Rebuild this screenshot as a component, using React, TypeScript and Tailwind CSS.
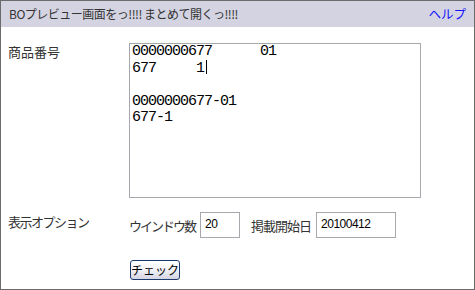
export default function App() {
  return (
    <div className="w-[475px] h-[290px] border border-[#6b6b6b] bg-white text-[#333] font-['Noto_Sans_CJK_JP',sans-serif] text-[13px] leading-none overflow-hidden">
      {/* title bar */}
      <div className="h-[26px] bg-[#d3d3e1] flex items-center justify-between pl-[8px] pr-[8px]">
        <span className="text-[12px] tracking-[-0.5px]">BOプレビュー画面をっ!!!! まとめて開くっ!!!!</span>
        <a href="#" className="text-[#1414ff] text-[12.5px]">
          ヘルプ
        </a>
      </div>

      <div className="pt-[16px] pl-[7px]">
        {/* item numbers */}
        <div className="flex">
          <div className="w-[121px] pt-[2px]">商品番号</div>
          <div
            role="textbox"
            className="w-[292px] h-[155px] border border-[#a5a9ad] pl-[2px] font-['Liberation_Mono',monospace] text-[15px] tracking-[-1px] leading-[16.25px] text-black whitespace-pre"
          >
            <div>{"0000000677      01"}</div>
            <div>
              {"677     1"}
              <span className="inline-block w-px h-[14px] bg-black align-[-2px] ml-[2px]" />
            </div>
            <div>{" "}</div>
            <div>0000000677-01</div>
            <div>677-1</div>
          </div>
        </div>

        {/* display options */}
        <div className="flex mt-[14px]">
          <div className="w-[121px] pt-[3px] tracking-[-1.5px]">表示オプション</div>
          <div className="flex items-center">
            <span className="mr-[5px] tracking-[-2px]">ウインドウ数</span>
            <input
              defaultValue="20"
              className="w-[40px] h-[26px] border border-[#a5a9ad] pl-[4px] pb-[2px] outline-none text-black font-['Liberation_Sans',sans-serif] text-[12px] tracking-[-0.5px]"
            />
            <span className="ml-[11px] mr-[5px] tracking-[-1px]">掲載開始日</span>
            <input
              defaultValue="20100412"
              className="w-[80px] h-[26px] border border-[#a5a9ad] pl-[4px] pb-[2px] outline-none text-black font-['Liberation_Sans',sans-serif] text-[12px] tracking-[-0.5px]"
            />
          </div>
        </div>

        {/* submit */}
        <div className="mt-[22px] pl-[122px]">
          <button
            type="button"
            className="w-[50px] h-[20px] rounded-[3px] border border-[#1c3a6e] bg-gradient-to-b from-white via-[#f1f1f6] to-[#d4d4e4] text-black text-[12px] flex items-center justify-center"
          >
            チェック
          </button>
        </div>
      </div>
    </div>
  );
}
